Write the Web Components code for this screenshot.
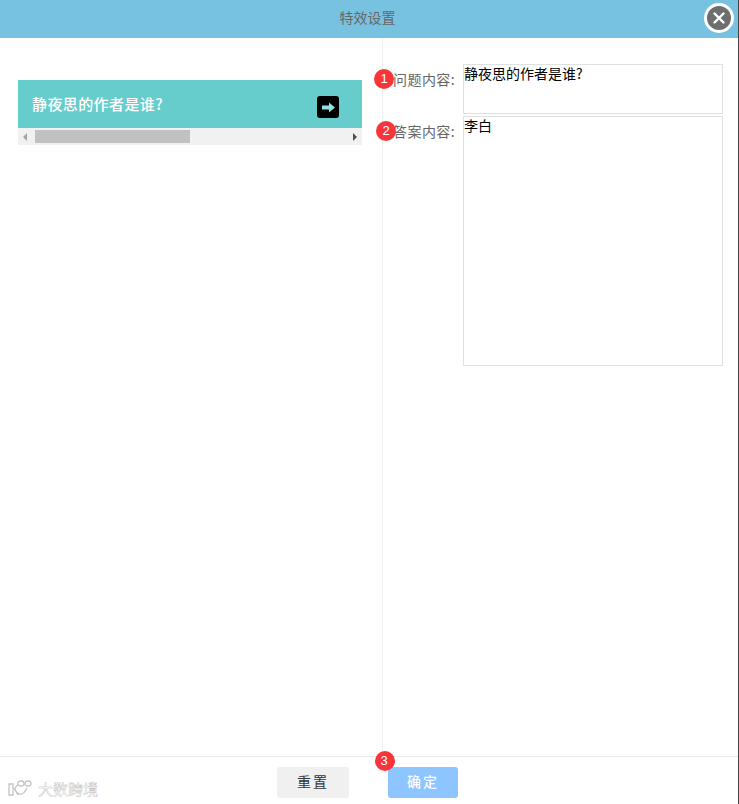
<!DOCTYPE html>
<html lang="zh">
<head>
<meta charset="UTF-8">
<title>特效设置</title>
<style>
  html, body { margin: 0; padding: 0; background: #fff; }
  body { font-family: "Noto Sans CJK SC", "Liberation Sans", sans-serif; }
</style>
</head>
<body>
<fx-dialog heading="特效设置">
  <fx-preview slot="left" text="静夜思的作者是谁?"></fx-preview>
  <fx-field slot="right" label="问题内容:" badge="1" rows="50" value="静夜思的作者是谁?"></fx-field>
  <fx-field slot="right" label="答案内容:" badge="2" shift="2" rows="250" value="李白"></fx-field>
  <fx-button slot="footer" kind="plain">重置</fx-button>
  <fx-button slot="footer" kind="primary" badge="3">确定</fx-button>
</fx-dialog>

<script>
  const FONT = '"Noto Sans CJK SC", "Liberation Sans", sans-serif';

  class FxBadge extends HTMLElement {
    constructor() {
      super();
      this.attachShadow({ mode: 'open' }).innerHTML = `
        <style>
          :host {
            position: absolute;
            display: flex;
            align-items: center;
            justify-content: center;
            width: 20px;
            height: 20px;
            border-radius: 50%;
            background: #f8353a;
            color: #fff;
            font: 13px/20px "Liberation Sans", sans-serif;
          }
        </style>
        <slot></slot>`;
    }
  }

  class FxDialog extends HTMLElement {
    constructor() {
      super();
      this.attachShadow({ mode: 'open' }).innerHTML = `
        <style>
          :host {
            display: flex;
            flex-direction: column;
            position: relative;
            width: 739px;
            height: 804px;
            box-sizing: border-box;
            border-right: 1px solid #444;
            overflow: hidden;
            background: #fff;
            font-family: ${FONT};
          }
          header {
            flex: none;
            height: 38px;
            box-sizing: border-box;
            padding: 0 3px 5px 0;
            display: flex;
            align-items: center;
            justify-content: center;
            background: #78c2e1;
            color: #666;
            font-size: 14px;
          }
          .close {
            position: absolute;
            left: 704px;
            top: 3px;
            width: 24px;
            height: 24px;
            border: 3px solid #fff;
            border-radius: 50%;
            background: #6e6e6e;
            display: flex;
            align-items: center;
            justify-content: center;
          }
          main {
            flex: 1;
            min-height: 0;
            display: flex;
          }
          .left {
            flex: none;
            width: 382px;
            box-sizing: content-box;
            border-right: 1px solid #efefef;
            padding-top: 42px;
          }
          .right {
            flex: 1;
            padding-top: 26px;
            display: flex;
            flex-direction: column;
            gap: 2px;
          }
          footer {
            flex: none;
            border-top: 1px solid #e9e9e9;
            position: relative;
            display: flex;
            justify-content: center;
            gap: 39px;
            padding: 10px 3px 0 0;
            box-sizing: border-box;
            height: 48px;
          }
          .mark {
            position: absolute;
            left: 8px;
            top: 22px;
            display: flex;
            align-items: center;
            gap: 4px;
            color: #fff;
            font-size: 15px;
            line-height: 20px;
            -webkit-text-stroke: 0.4px #bdbdbd;
          }
        </style>
        <header>${this.getAttribute('heading')}</header>
        <div class="close">
          <svg width="14" height="14" viewBox="0 0 14 14"><path d="M2.5 2.5 11.5 11.5M11.5 2.5 2.5 11.5" stroke="#fff" stroke-width="2.4" stroke-linecap="round"/></svg>
        </div>
        <main>
          <div class="left"><slot name="left"></slot></div>
          <div class="right"><slot name="right"></slot></div>
        </main>
        <footer>
          <slot name="footer"></slot>
          <div class="mark">
            <svg width="26" height="18" viewBox="0 0 26 18" fill="none" stroke="#c4c4c4" stroke-width="1.3">
              <path d="M1 4 1 15 5 15 5 4Z" fill="#fff"/>
              <path d="M10 4 6.5 9 10 15M7 9C9 15 15 17 19 8"/>
              <rect x="10" y="1" width="6" height="5" rx="2.5"/>
              <rect x="17" y="1" width="6" height="5" rx="2.5"/>
            </svg>
            <span>大数跨境</span>
          </div>
        </footer>`;
    }
  }

  class FxPreview extends HTMLElement {
    constructor() {
      super();
      this.attachShadow({ mode: 'open' }).innerHTML = `
        <style>
          :host {
            display: block;
            margin-left: 18px;
            width: 344px;
          }
          .card {
            height: 48px;
            box-sizing: border-box;
            background: #67cdcc;
            color: #fff;
            font-size: 15px;
            font-weight: 500;
            letter-spacing: 0.4px;
            display: flex;
            align-items: center;
            justify-content: space-between;
            padding: 0 23px 2px 14px;
          }
          .go {
            width: 22px;
            height: 22px;
            margin-top: 8px;
            border-radius: 3px;
            background: #000;
            display: flex;
            align-items: center;
            justify-content: center;
          }
          .bar {
            height: 17px;
            background: #f1f1f1;
            display: flex;
            align-items: center;
            justify-content: space-between;
            padding: 0 5px;
            position: relative;
          }
          .thumb {
            position: absolute;
            left: 17px;
            top: 2px;
            width: 155px;
            height: 13px;
            background: #c1c1c1;
          }
        </style>
        <div class="card">
          <span>${this.getAttribute('text')}</span>
          <span class="go">
            <svg width="15" height="11" viewBox="0 0 15 11"><path d="M1 3.4H8V.4L14 5.5 8 10.6V7.6H1Z" fill="#8fe3e0"/></svg>
          </span>
        </div>
        <div class="bar">
          <svg width="5" height="8" viewBox="0 0 5 8"><path d="M4 0V8L0 4Z" fill="#a3a3a3"/></svg>
          <div class="thumb"></div>
          <svg width="5" height="8" viewBox="0 0 5 8"><path d="M1 0V8L5 4Z" fill="#505050"/></svg>
        </div>`;
    }
  }

  class FxField extends HTMLElement {
    constructor() {
      super();
      const h = this.getAttribute('rows');
      const shift = Number(this.getAttribute('shift') || 0);
      this.attachShadow({ mode: 'open' }).innerHTML = `
        <style>
          :host {
            display: flex;
            position: relative;
            height: ${h}px;
            font-size: 14px;
          }
          label {
            flex: none;
            width: 72px;
            box-sizing: border-box;
            padding-top: 6px;
            text-align: right;
            color: #666;
            line-height: 18px;
            letter-spacing: 0.4px;
            white-space: nowrap;
          }
          .box {
            flex: none;
            width: 260px;
            margin-left: 8px;
            box-sizing: border-box;
            border: 1px solid #e0e0e0;
            color: #000;
            line-height: 16px;
            white-space: pre-wrap;
          }
          fx-badge { left: ${-9 + shift}px; top: 5px; }
        </style>
        <label>${this.getAttribute('label')}</label>
        <div class="box">${this.getAttribute('value')}</div>
        <fx-badge>${this.getAttribute('badge')}</fx-badge>`;
    }
  }

  class FxButton extends HTMLElement {
    constructor() {
      super();
      const primary = this.getAttribute('kind') === 'primary';
      const badge = this.getAttribute('badge');
      this.attachShadow({ mode: 'open' }).innerHTML = `
        <style>
          :host {
            display: flex;
            align-items: center;
            justify-content: center;
            position: relative;
            width: ${primary ? 70 : 72}px;
            height: 31px;
            box-sizing: border-box;
            padding-bottom: 3px;
            border-radius: 3px;
            background: ${primary ? '#8cc5ff' : '#f0f0f0'};
            color: ${primary ? '#fff' : '#333'};
            font-size: 14px;
            font-weight: ${primary ? 500 : 400};
            letter-spacing: 2px;
          }
          fx-badge { left: -13px; top: -16px; }
        </style>
        <slot></slot>
        ${badge ? `<fx-badge>${badge}</fx-badge>` : ''}`;
    }
  }

  customElements.define('fx-badge', FxBadge);
  customElements.define('fx-dialog', FxDialog);
  customElements.define('fx-preview', FxPreview);
  customElements.define('fx-field', FxField);
  customElements.define('fx-button', FxButton);
</script>
</body>
</html>
